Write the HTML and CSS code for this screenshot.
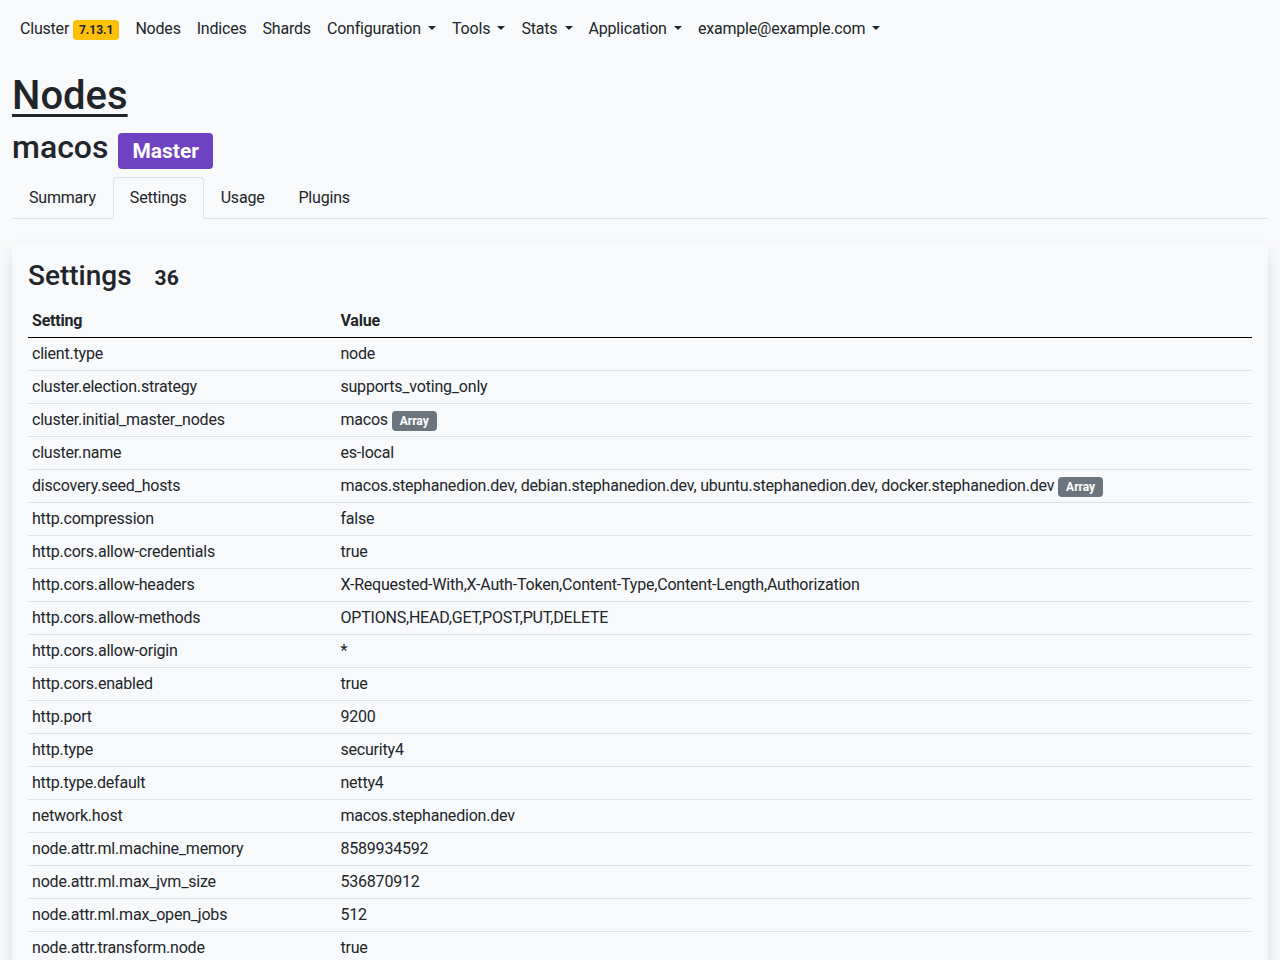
FILE: index.html
```html
<!DOCTYPE html>
<html lang="en">
<head>
<meta charset="utf-8">
<title>Nodes - macos</title>
<link rel="stylesheet" href="styles.css">
</head>
<body>
<nav class="navbar">
  <ul class="nav-list">
    <li><a class="nav-link" href="#">Cluster <span class="badge badge-warning">7.13.1</span></a></li>
    <li><a class="nav-link" href="#">Nodes</a></li>
    <li><a class="nav-link" href="#">Indices</a></li>
    <li><a class="nav-link" href="#">Shards</a></li>
    <li><a class="nav-link dropdown" href="#">Configuration</a></li>
    <li><a class="nav-link dropdown" href="#">Tools</a></li>
    <li><a class="nav-link dropdown" href="#">Stats</a></li>
    <li><a class="nav-link dropdown" href="#">Application</a></li>
    <li><a class="nav-link dropdown" href="#">example@example.com</a></li>
  </ul>
</nav>
<main class="container">
  <h1 class="title"><a href="#">Nodes</a></h1>
  <h2 class="subtitle">macos <span class="badge badge-master">Master</span></h2>
  <ul class="tabs">
    <li><a class="tab" href="#">Summary</a></li>
    <li><a class="tab active" href="#">Settings</a></li>
    <li><a class="tab" href="#">Usage</a></li>
    <li><a class="tab" href="#">Plugins</a></li>
  </ul>
  <section class="card">
    <h3 class="card-title">Settings <span class="count">36</span></h3>
    <table class="table">
      <thead>
        <tr><th class="col-setting">Setting</th><th>Value</th></tr>
      </thead>
      <tbody>
        <tr><td>client.type</td><td>node</td></tr>
        <tr><td>cluster.election.strategy</td><td>supports_voting_only</td></tr>
        <tr><td>cluster.initial_master_nodes</td><td>macos <span class="badge badge-secondary">Array</span></td></tr>
        <tr><td>cluster.name</td><td>es-local</td></tr>
        <tr><td>discovery.seed_hosts</td><td>macos.stephanedion.dev, debian.stephanedion.dev, ubuntu.stephanedion.dev, docker.stephanedion.dev <span class="badge badge-secondary">Array</span></td></tr>
        <tr><td>http.compression</td><td>false</td></tr>
        <tr><td>http.cors.allow-credentials</td><td>true</td></tr>
        <tr><td>http.cors.allow-headers</td><td>X-Requested-With,X-Auth-Token,Content-Type,Content-Length,Authorization</td></tr>
        <tr><td>http.cors.allow-methods</td><td>OPTIONS,HEAD,GET,POST,PUT,DELETE</td></tr>
        <tr><td>http.cors.allow-origin</td><td>*</td></tr>
        <tr><td>http.cors.enabled</td><td>true</td></tr>
        <tr><td>http.port</td><td>9200</td></tr>
        <tr><td>http.type</td><td>security4</td></tr>
        <tr><td>http.type.default</td><td>netty4</td></tr>
        <tr><td>network.host</td><td>macos.stephanedion.dev</td></tr>
        <tr><td>node.attr.ml.machine_memory</td><td>8589934592</td></tr>
        <tr><td>node.attr.ml.max_jvm_size</td><td>536870912</td></tr>
        <tr><td>node.attr.ml.max_open_jobs</td><td>512</td></tr>
        <tr><td>node.attr.transform.node</td><td>true</td></tr>
        <tr><td>node.attr.xpack.installed</td><td>true</td></tr>
        <tr><td>node.name</td><td>macos</td></tr>
        <tr><td>path.data</td><td>/usr/local/var/lib/elasticsearch</td></tr>
      </tbody>
    </table>
  </section>
</main>
</body>
</html>
```
FILE: styles.css
```css
* { box-sizing: border-box; }
html, body { margin: 0; padding: 0; }
body {
  background: #f8f9fa;
  color: #212529;
  font-family: Roboto, "Liberation Sans", sans-serif;
  font-size: 16px;
  line-height: 1.5;
  letter-spacing: -0.2px;
}
a { color: inherit; text-decoration: none; }

.navbar { padding: 9px 12px 7px; }
.nav-list { list-style: none; margin: 0; padding: 0; display: flex; }
.nav-link { display: block; padding: 8px; color: #212529; }
.dropdown::after {
  content: "";
  display: inline-block;
  margin-left: 0.45em;
  vertical-align: 0.255em;
  border-top: 0.3em solid;
  border-right: 0.3em solid transparent;
  border-left: 0.3em solid transparent;
}

.badge {
  display: inline-block;
  font-weight: 700;
  line-height: 1;
  text-align: center;
  white-space: nowrap;
  vertical-align: baseline;
  border-radius: 4px;
  letter-spacing: 0;
}
.badge-warning {
  background: #ffc107;
  color: #212529;
  font-size: 12px;
  padding: 4px 6px;
}
.badge-master {
  background: #6f42c1;
  color: #fff;
  font-size: 21px;
  padding: 8px 14px 7px;
  margin-left: 2px;
}
.badge-secondary {
  background: #6c757d;
  color: #fff;
  font-size: 12px;
  padding: 4px 8px;
}

.container { padding: 16px 12px 0; }
.title {
  margin: 0 0 8px;
  font-size: 40px;
  font-weight: 500;
  line-height: 1.2;
  letter-spacing: 0;
}
.title a { text-decoration: underline; text-decoration-thickness: 3px; text-underline-offset: 5px; }
.subtitle {
  margin: 0 0 8px;
  font-size: 32px;
  font-weight: 500;
  line-height: 1.2;
  letter-spacing: 0;
}

.tabs {
  list-style: none;
  margin: 0;
  padding: 0;
  display: flex;
  border-bottom: 1px solid #dee2e6;
}
.tab {
  display: block;
  padding: 8px 16px;
  margin-bottom: -1px;
  border: 1px solid transparent;
  border-radius: 4px 4px 0 0;
  color: #212529;
}
.tab.active {
  border-color: #dee2e6 #dee2e6 #f8f9fa;
  background: #f8f9fa;
}

.card {
  margin-top: 24px;
  padding: 16px;
  background: #f8f9fa;
  border-radius: 6px;
  box-shadow: 0 8px 16px rgba(0, 0, 0, 0.12);
}
.card-title {
  margin: 0 0 12px;
  font-size: 28px;
  font-weight: 500;
  line-height: 1.2;
  letter-spacing: 0;
}
.count {
  font-size: 21px;
  font-weight: 700;
  margin-left: 16px;
}

.table { width: 100%; border-collapse: collapse; }
.table th, .table td {
  text-align: left;
  padding: 4px;
  border-bottom: 1px solid #dee2e6;
  vertical-align: top;
}
.table th { font-weight: 700; border-bottom: 1px solid #000; }
.col-setting { width: 25.2%; }
```
